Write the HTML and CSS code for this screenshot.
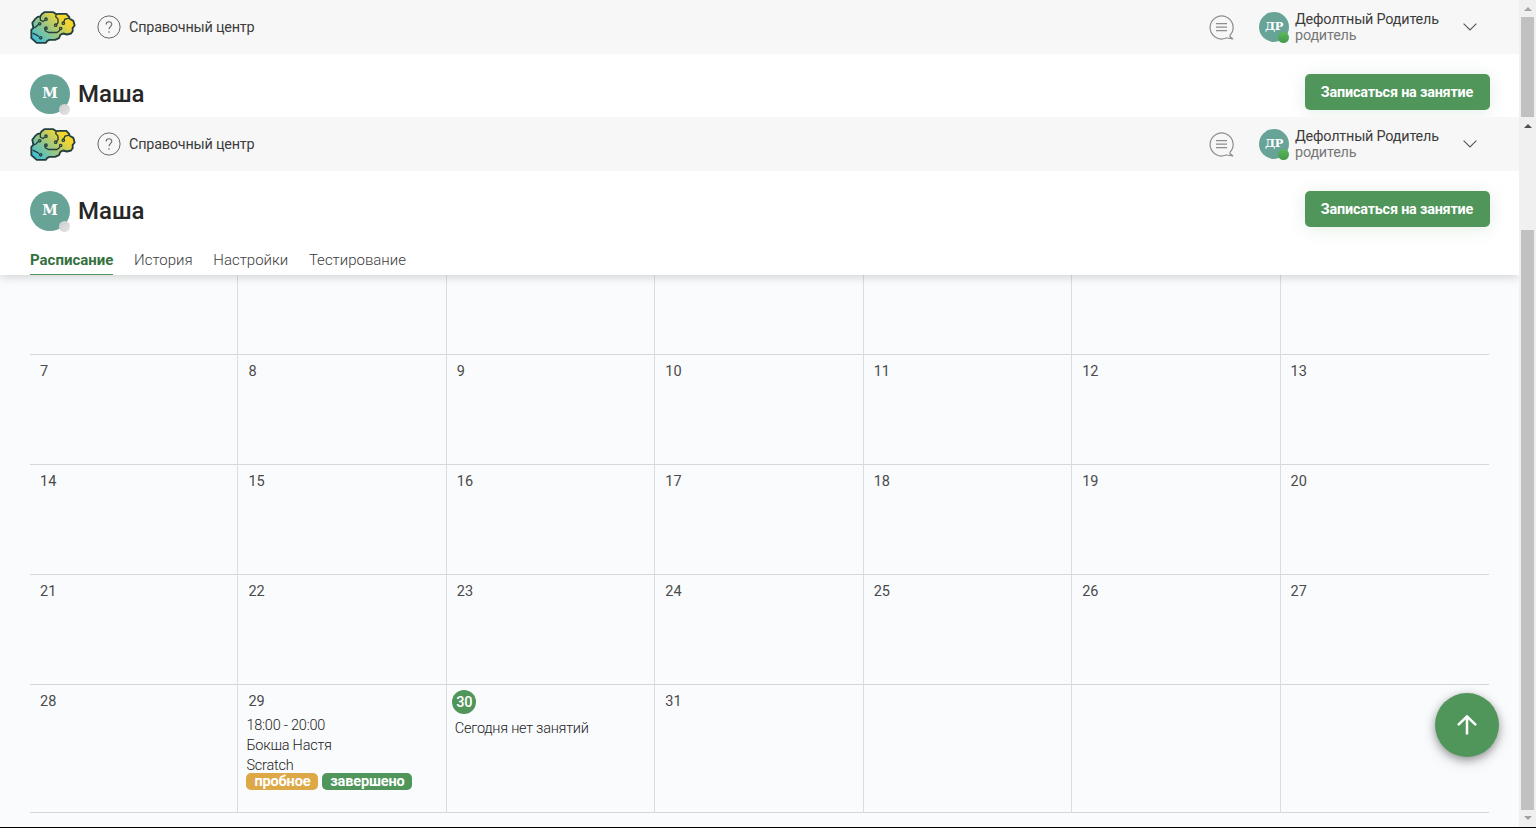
FILE: index.html
```html
<!DOCTYPE html>
<html lang="ru">
<head>
<meta charset="utf-8">
<title>Расписание</title>
<link rel="stylesheet" href="styles.css">
</head>
<body>
<svg class="sprite" width="0" height="0" aria-hidden="true">
  <defs>
    <linearGradient id="brain-fill" x1="0" y1="1" x2="1" y2="0.25">
      <stop offset="0.05" stop-color="#35bdde"/><stop offset="0.5" stop-color="#a0c77f"/><stop offset="0.85" stop-color="#f7d62c"/>
    </linearGradient>
    <symbol id="brain" viewBox="89 32 138 98">
      <path fill="url(#brain-fill)" stroke="#243f40" stroke-width="5.5" stroke-linejoin="round" d="M104 56L112 49L120 48L124 41L132 35H159L168 41L177 40H198L207 50V54L219 61L223 75L217 82V92L212 99L200 102L188 99L180 103L176 113L164 118H147L141 121L137 127H109L93 113V88L99 82L96 67Z"/>
      <g fill="none" stroke="#243f40" stroke-width="4">
        <path d="M120 48V59L128 63L133 59M114 72L106 80L98 82M133 82L135 91L145 96H170L178 90V87M168 41L166 48L173 56V67L169 71M207 53L194 56L190 64M97 98L108 103L116 108"/>
        <circle cx="137" cy="56" r="3.5"/><circle cx="118" cy="70" r="3.5"/><circle cx="137" cy="83" r="3.5"/><circle cx="166" cy="74" r="3.5"/><circle cx="189" cy="68" r="3.5"/><circle cx="181" cy="84" r="3.5"/><circle cx="121" cy="112" r="3.5"/>
      </g>
    </symbol>
    <symbol id="help" viewBox="0 0 24 24"><circle cx="12" cy="12" r="11.1" fill="none" stroke="#666" stroke-width="1"/><path d="M9.2 9.5C9.2 5.9 14.8 5.9 14.8 9.3C14.8 11.4 12 11.8 12 14.3" fill="none" stroke="#666" stroke-width="1.1"/><circle cx="12" cy="17" r=".8" fill="#666"/></symbol>
    <symbol id="chat" viewBox="0 0 25 25"><path d="M20.6 20.7A11.5 11.5 0 1 0 16.4 23.3Q17.2 22.8 18 23L23.7 23.8Q21.2 22.2 20.6 20.7" fill="none" stroke="#8d8d8d" stroke-width="1.2" stroke-linejoin="round"/><path d="M7 8.7H18M7 12.2H18M7 15.7H18" stroke="#8d8d8d" stroke-width="1.3"/></symbol>
    <symbol id="chevron" viewBox="0 0 14 8"><path d="M.6.6L7 7L13.4.6" fill="none" stroke="#555" stroke-width="1.1"/></symbol>
  </defs>
</svg>
<div class="screen">
  <main class="page">
    <section class="head head-cut">
      <header class="topbar">
        <svg class="logo"><use href="#brain"/></svg>
        <svg class="help"><use href="#help"/></svg>
        <span class="help-text">Справочный центр</span>
        <svg class="chat"><use href="#chat"/></svg>
        <div class="avatar small">ДР<i class="status online"></i></div>
        <div class="user"><div>Дефолтный Родитель</div><div class="role">родитель</div></div>
        <svg class="chevron"><use href="#chevron"/></svg>
      </header>
      <div class="student">
        <div class="avatar">М<i class="status"></i></div>
        <h1>Маша</h1>
        <button class="book"><span>Записаться на занятие</span></button>
      </div>
    </section>
    <section class="head head-full">
      <header class="topbar">
        <svg class="logo"><use href="#brain"/></svg>
        <svg class="help"><use href="#help"/></svg>
        <span class="help-text">Справочный центр</span>
        <svg class="chat"><use href="#chat"/></svg>
        <div class="avatar small">ДР<i class="status online"></i></div>
        <div class="user"><div>Дефолтный Родитель</div><div class="role">родитель</div></div>
        <svg class="chevron"><use href="#chevron"/></svg>
      </header>
      <div class="student">
        <div class="avatar">М<i class="status"></i></div>
        <h1>Маша</h1>
        <button class="book"><span>Записаться на занятие</span></button>
      </div>
      <nav class="tabs"><a class="active">Расписание</a><a>История</a><a>Настройки</a><a>Тестирование</a></nav>
    </section>
    <section class="calendar">
      <div class="day"></div><div class="day"></div><div class="day"></div><div class="day"></div><div class="day"></div><div class="day"></div><div class="day"></div>
      <div class="day">7</div><div class="day">8</div><div class="day">9</div><div class="day">10</div><div class="day">11</div><div class="day">12</div><div class="day">13</div>
      <div class="day">14</div><div class="day">15</div><div class="day">16</div><div class="day">17</div><div class="day">18</div><div class="day">19</div><div class="day">20</div>
      <div class="day">21</div><div class="day">22</div><div class="day">23</div><div class="day">24</div><div class="day">25</div><div class="day">26</div><div class="day">27</div>
      <div class="day">28</div>
      <div class="day">29
        <div class="lesson"><div>18:00 - 20:00</div><div>Бокша Настя</div><div>Scratch</div>
          <div class="tags"><span class="tag trial">пробное</span><span class="tag done">завершено</span></div></div>
      </div>
      <div class="day today"><span class="today-number">30</span><div class="empty">Сегодня нет занятий</div></div>
      <div class="day">31</div><div class="day"></div><div class="day"></div><div class="day"></div>
    </section>
    <button class="to-top"><svg viewBox="0 0 20 20"><path d="M10 19.4V1.8M1 10.2L10 1.4L19 10.2" fill="none" stroke="#fff" stroke-width="2.5"/></svg></button>
  </main>
  <aside class="scrollbars">
    <div class="bar bar-first"><i class="arrow up muted"></i><div class="thumb"></div></div>
    <div class="bar bar-second"><i class="arrow up"></i><div class="thumb"></div><i class="arrow down muted"></i></div>
  </aside>
</div>
</body>
</html>
```
FILE: styles.css
```css
* { box-sizing: border-box; }
body { margin: 0; font-family: Roboto, sans-serif; font-size: 14.5px; color: #3c3c3c; overflow: hidden; }
button { border: 0; padding: 0; font-family: inherit; color: #fff; background: #50965b; }
.sprite { position: absolute; }
.screen { display: flex; height: 828px; background: #fafbfd; border-bottom: 1px solid #000; }
.page { width: 1519px; position: relative; }
.head { background: #fff; overflow: hidden; }
.head-cut { height: 117px; }
.head-full { height: 157.5px; overflow: visible; position: relative; box-shadow: 0 2px 9px rgba(0,0,0,.17); clip-path: inset(0 0 -20px 0); }
.topbar { display: flex; align-items: center; height: 54px; padding: 0 42px 0 30px; background: #f7f7f7; }
.logo { width: 46px; height: 33px; }
.help { width: 24px; height: 24px; margin-left: 20.5px; }
.help-text { margin-left: 8.5px; font-size: 14.4px; letter-spacing: -.2px; }
.chat { width: 25px; height: 25px; margin-left: auto; }
.avatar { position: relative; flex: none; width: 40px; height: 40px; border-radius: 50%; background: #68a398; color: #fff; font: bold 14px/38px "DejaVu Serif", serif; text-align: center; }
.avatar.small { width: 30px; height: 30px; margin-left: 25px; font-size: 11.5px; line-height: 29px; letter-spacing: -.5px; }
.status { position: absolute; right: 0; bottom: -1px; width: 11px; height: 11px; border-radius: 50%; background: linear-gradient(135deg, #ccc, #e5e5e5); }
.online { background: linear-gradient(#5bb75b, #439a4d); }
.user { width: 150px; margin-left: 6px; padding-top: 1px; line-height: 16px; font-size: 14.4px; letter-spacing: -.2px; white-space: nowrap; }
.role { color: #777; }
.chevron { width: 14px; height: 8px; margin-left: 18px; }
.student { display: flex; height: 80px; padding: 20px 29.5px 0 30px; }
h1 { margin: 0 0 0 8px; font-size: 24px; font-weight: 500; line-height: 40px; color: #262626; }
.book { width: 185px; height: 36px; margin-left: auto; border-radius: 5px; font-size: 14.4px; font-weight: 700; letter-spacing: -.2px; box-shadow: 0 2px 18px rgba(80,150,91,.16); }
.tabs { display: flex; height: 24px; padding-left: 30px; gap: 20.7px; font-size: 15px; font-weight: 300; line-height: 18px; }
.active { color: #35713f; font-weight: 700; border-bottom: 1px solid #50965b; }
.calendar { display: grid; grid-template-columns: repeat(7, 1fr); grid-template-rows: 80.5px 110px 110px 110px 128px; margin: 0 30px; }
.day { padding: 7.5px 0 0 10px; line-height: 18px; border-right: 1px solid #dcdde0; border-bottom: 1px solid #d6d7da; color: #4a4a4a; white-space: nowrap; }
.day:nth-child(7n) { border-right: 0; }
.lesson { margin: 5px 0 0 -2px; font-weight: 300; letter-spacing: -.23px; line-height: 20px; color: #222; }
.tags { display: flex; gap: 4px; margin-top: -3px; }
.tag { height: 17px; border-radius: 5px; line-height: 17px; font-weight: 700; letter-spacing: -.15px; text-align: center; color: #fff; }
.trial { width: 72px; background: #dda947; }
.done { width: 90px; background: #50965b; }
.today { padding: 4.5px 0 0 5px; }
.today-number { display: block; width: 24px; height: 24px; border-radius: 50%; padding-left: 1px; background: #50965b; color: #fff; text-align: center; line-height: 25px; font-weight: 500; letter-spacing: -.2px; }
.empty { margin: 5.5px 0 0 3px; line-height: 20px; font-weight: 300; letter-spacing: -.26px; color: #222; }
.to-top { position: absolute; left: 1435px; top: 693px; width: 64px; height: 64px; border-radius: 50%; display: flex; align-items: center; justify-content: center; box-shadow: 0 3px 8px rgba(0,0,0,.35), 0 5px 16px rgba(0,0,0,.12); }
.to-top svg { width: 20px; height: 20px; }
.scrollbars { width: 17px; background: #f0f0f0; }
.bar { display: flex; flex-direction: column; align-items: center; }
.bar-first { height: 117px; padding-top: 7px; }
.bar-second { height: 710px; padding-top: 7px; }
.arrow { border: 4px solid transparent; border-top: 0; border-bottom: 4px solid #505050; height: 4px; flex: none; }
.down { transform: rotate(180deg); margin-top: 6px; }
.muted { border-bottom-color: #a3a3a3; }
.thumb { width: 13px; background: #c1c1c1; }
.bar-first .thumb { height: 100px; margin-top: 6px; }
.bar-second .thumb { height: 580px; margin-top: 102px; flex: none; }
```
